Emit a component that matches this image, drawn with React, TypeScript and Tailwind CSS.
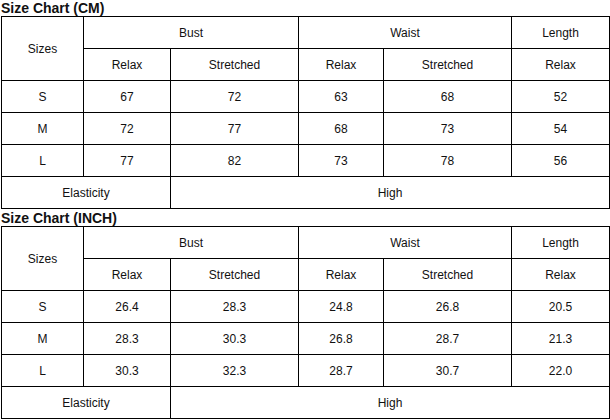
import React from 'react';

type Row = { size: string; values: string[] };

const cmRows: Row[] = [
  { size: 'S', values: ['67', '72', '63', '68', '52'] },
  { size: 'M', values: ['72', '77', '68', '73', '54'] },
  { size: 'L', values: ['77', '82', '73', '78', '56'] },
];

const inchRows: Row[] = [
  { size: 'S', values: ['26.4', '28.3', '24.8', '26.8', '20.5'] },
  { size: 'M', values: ['28.3', '30.3', '26.8', '28.7', '21.3'] },
  { size: 'L', values: ['30.3', '32.3', '28.7', '30.7', '22.0'] },
];

const cell = 'border border-black text-center align-middle h-[32px] p-0';

function SizeTable({ rows }: { rows: Row[] }) {
  return (
    <table className="table-fixed border-collapse w-[608px] ml-px text-[12px] leading-[14px] text-[#111]">
      <colgroup>
        <col className="w-[82px]" />
        <col className="w-[87px]" />
        <col className="w-[128px]" />
        <col className="w-[85px]" />
        <col className="w-[128px]" />
        <col className="w-[98px]" />
      </colgroup>
      <tbody>
        <tr>
          <td rowSpan={2} className={cell}>Sizes</td>
          <td colSpan={2} className={cell}>Bust</td>
          <td colSpan={2} className={cell}>Waist</td>
          <td className={cell}>Length</td>
        </tr>
        <tr>
          <td className={cell}>Relax</td>
          <td className={cell}>Stretched</td>
          <td className={cell}>Relax</td>
          <td className={cell}>Stretched</td>
          <td className={cell}>Relax</td>
        </tr>
        {rows.map((row) => (
          <tr key={row.size}>
            <td className={cell}>{row.size}</td>
            {row.values.map((v, i) => (
              <td key={i} className={cell}>{v}</td>
            ))}
          </tr>
        ))}
        <tr>
          <td colSpan={2} className={cell}>Elasticity</td>
          <td colSpan={4} className={cell}>High</td>
        </tr>
      </tbody>
    </table>
  );
}

export default function App() {
  return (
    <div className="w-[610px] h-[420px] bg-white overflow-hidden font-['Liberation_Sans',Arial,sans-serif]">
      <h2 className="text-[14px] font-bold leading-[16px] h-[16px] pl-px text-[#111]">Size Chart (CM)</h2>
      <SizeTable rows={cmRows} />
      <h2 className="text-[14px] font-bold leading-[18px] h-[17px] pl-px text-[#111]">Size Chart (INCH)</h2>
      <SizeTable rows={inchRows} />
    </div>
  );
}
